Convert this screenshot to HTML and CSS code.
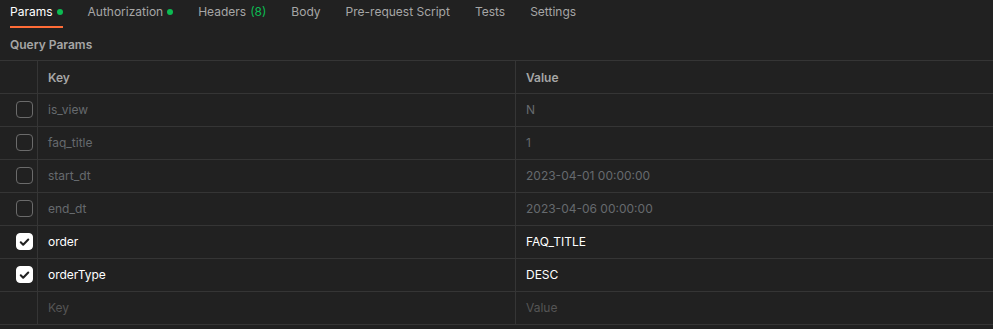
FILE: index.html
```html
<!DOCTYPE html>
<html lang="en">
<head>
  <meta charset="UTF-8">
  <title>Query Params</title>
  <link rel="stylesheet" href="styles.css">
</head>
<body>
  <!-- Request tabs -->
  <nav class="tabs">
    <div class="tab active">Params <span class="dot"></span></div>
    <div class="tab">Authorization <span class="dot"></span></div>
    <div class="tab">Headers <span class="count">(8)</span></div>
    <div class="tab">Body</div>
    <div class="tab">Pre-request Script</div>
    <div class="tab">Tests</div>
    <div class="tab">Settings</div>
  </nav>

  <div class="section-title">Query Params</div>

  <!-- Params table -->
  <div class="params">
    <div class="row head">
      <div class="cell check"></div>
      <div class="cell">Key</div>
      <div class="cell">Value</div>
    </div>
    <div class="row off">
      <div class="cell check"><span class="box"></span></div>
      <div class="cell">is_view</div>
      <div class="cell">N</div>
    </div>
    <div class="row off">
      <div class="cell check"><span class="box"></span></div>
      <div class="cell">faq_title</div>
      <div class="cell">1</div>
    </div>
    <div class="row off">
      <div class="cell check"><span class="box"></span></div>
      <div class="cell">start_dt</div>
      <div class="cell">2023-04-01 00:00:00</div>
    </div>
    <div class="row off">
      <div class="cell check"><span class="box"></span></div>
      <div class="cell">end_dt</div>
      <div class="cell">2023-04-06 00:00:00</div>
    </div>
    <div class="row on">
      <div class="cell check"><span class="box checked"><svg viewBox="0 0 16 16" width="16" height="16"><path d="M4 8.3l2.6 2.6L12 5.4" fill="none" stroke="#212121" stroke-width="2.2" stroke-linecap="round" stroke-linejoin="round"/></svg></span></div>
      <div class="cell">order</div>
      <div class="cell">FAQ_TITLE</div>
    </div>
    <div class="row on">
      <div class="cell check"><span class="box checked"><svg viewBox="0 0 16 16" width="16" height="16"><path d="M4 8.3l2.6 2.6L12 5.4" fill="none" stroke="#212121" stroke-width="2.2" stroke-linecap="round" stroke-linejoin="round"/></svg></span></div>
      <div class="cell">orderType</div>
      <div class="cell">DESC</div>
    </div>
    <div class="row empty">
      <div class="cell check"></div>
      <div class="cell">Key</div>
      <div class="cell">Value</div>
    </div>
  </div>
</body>
</html>
```

FILE: styles.css
```css
* {
  margin: 0;
  padding: 0;
  box-sizing: border-box;
}
html, body {
  background: #212121;
  font-family: Inter, "Noto Sans", sans-serif;
  font-size: 12px;
  color: #a6a6a6;
  overflow: hidden;
}
/* Tabs */
.tabs {
  display: flex;
  gap: 25px;
  height: 28px;
  padding-left: 10px;
}
.tab {
  display: flex;
  align-items: flex-start;
  gap: 4px;
  padding-top: 4px;
  line-height: 16px;
  color: #a6a6a6;
  border-bottom: 2px solid transparent;
}
.tab.active {
  color: #fff;
  border-bottom-color: #ff6c37;
}
.dot {
  width: 6px;
  height: 6px;
  margin-top: 5px;
  border-radius: 50%;
  background: #0cbb52;
}
.count {
  color: #0cbb52;
}
/* Section title */
.section-title {
  height: 32px;
  padding-left: 10px;
  display: flex;
  align-items: center;
  font-weight: 600;
  color: #a6a6a6;
}
/* Params table */
.params {
  border-top: 1px solid #353535;
}
.row {
  display: grid;
  grid-template-columns: 38px 478px 1fr;
  height: 33px;
  border-bottom: 1px solid #353535;
}
.cell {
  display: flex;
  align-items: center;
  padding-left: 10px;
  padding-bottom: 1px;
  border-right: 1px solid #353535;
  white-space: nowrap;
}
.cell:last-child {
  border-right: none;
}
.cell.check {
  padding-left: 16px;
}
.row.head .cell {
  padding-bottom: 0;
  font-weight: 600;
  color: #a6a6a6;
}
.row.off .cell {
  color: #666a6e;
}
.row.on .cell {
  color: #fff;
}
.row.empty .cell {
  color: #555;
}
.box {
  width: 17px;
  height: 17px;
  border: 1px solid #6b6b6b;
  border-radius: 4px;
  display: flex;
  align-items: center;
  justify-content: center;
}
.box.checked {
  background: #fff;
  border-color: #fff;
}
```
